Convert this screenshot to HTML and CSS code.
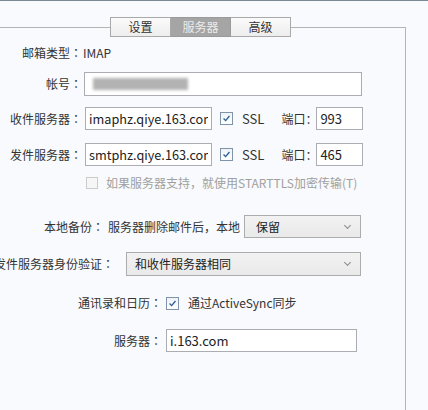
FILE: index.html
```html
<!DOCTYPE html>
<html lang="zh-CN">
<head>
<meta charset="utf-8">
<title>服务器设置</title>
<link rel="stylesheet" href="styles.css">
</head>
<body>
<div class="frame">
  <div class="tabs">
    <div class="tab">设置</div>
    <div class="tab active">服务器</div>
    <div class="tab">高级</div>
  </div>

  <div class="row r-type">
    <span class="label la">邮箱类型<span class="colon">：</span></span>
    <span class="value">IMAP</span>
  </div>

  <div class="row r-account">
    <span class="label la">帐号<span class="colon">：</span></span>
    <div class="field account"><span class="blur"></span></div>
  </div>

  <div class="row r-in">
    <span class="label la">收件服务器<span class="colon">：</span></span>
    <input class="field host" type="text" value="imaphz.qiye.163.com" readonly>
    <span class="check on"><svg viewBox="0 0 13 13"><path d="M3 6.5 L5.5 9 L10 3.5" /></svg></span>
    <span class="ssl">SSL</span>
    <span class="port-label">端口<span class="colon">：</span></span>
    <input class="field port" type="text" value="993" readonly>
  </div>

  <div class="row r-out">
    <span class="label la">发件服务器<span class="colon">：</span></span>
    <input class="field host" type="text" value="smtphz.qiye.163.com" readonly>
    <span class="check on"><svg viewBox="0 0 13 13"><path d="M3 6.5 L5.5 9 L10 3.5" /></svg></span>
    <span class="ssl">SSL</span>
    <span class="port-label">端口<span class="colon">：</span></span>
    <input class="field port" type="text" value="465" readonly>
  </div>

  <div class="row r-tls">
    <span class="check disabled"></span>
    <span class="muted">如果服务器支持，就使用STARTTLS加密传输(T)</span>
  </div>

  <div class="row r-backup">
    <span class="label lb">本地备份<span class="colon">：</span></span>
    <span class="value">服务器删除邮件后，本地</span>
    <div class="select keep"><span>保留</span><span class="chev"></span></div>
  </div>

  <div class="row r-auth">
    <span class="label lc">发件服务器身份验证<span class="colon">：</span></span>
    <div class="select same"><span>和收件服务器相同</span><span class="chev"></span></div>
  </div>

  <div class="row r-sync">
    <span class="label ld">通讯录和日历<span class="colon">：</span></span>
    <span class="check on"><svg viewBox="0 0 13 13"><path d="M3 6.5 L5.5 9 L10 3.5" /></svg></span>
    <span class="value sync">通过ActiveSync同步</span>
  </div>

  <div class="row r-server">
    <span class="label ld">服务器<span class="colon">：</span></span>
    <input class="field server" type="text" value="i.163.com" readonly>
  </div>
</div>
</body>
</html>
```

FILE: styles.css
```css
html, body {
  margin: 0;
  padding: 0;
  height: 100%;
  overflow: hidden;
}
body {
  background: #f8fafd;
  border-top: 1px solid #7b8793;
  font-family: "Noto Sans CJK SC", "Noto Sans", sans-serif;
  font-size: 12px;
  color: #333;
  box-sizing: border-box;
}
.colon {
  font-family: "Noto Sans CJK TC", "Noto Sans CJK SC", sans-serif;
}
.frame {
  margin-top: 26px;
  width: 405px;
  height: 400px;
  border-top: 1px solid #b4b4b4;
  border-right: 1px solid #b4b4b4;
  display: flex;
  flex-direction: column;
}
.tabs {
  display: flex;
  margin: -11px 0 0 110px;
  height: 20px;
}
.tab {
  width: 59px;
  height: 18px;
  border: 1px solid #a9a9a9;
  border-left: none;
  background: linear-gradient(#fbfbfb, #ededed);
  text-align: center;
  line-height: 18px;
  color: #333;
}
.tab:first-child {
  border-left: 1px solid #a9a9a9;
}
.tab.active {
  background: #a5a5a5;
  color: #ececec;
  border-color: #9a9a9a;
}
.row {
  display: flex;
  align-items: center;
  white-space: nowrap;
  line-height: 16px;
}
.label {
  flex: none;
  display: flex;
  justify-content: flex-end;
}
.la { width: 82px; margin-right: 2px; }
.lb { width: 104px; margin-right: 4px; }
.lc { width: 114px; margin-right: 12px; }
.ld { width: 162px; margin-right: 4px; }

.r-type { height: 24px; margin-top: 4px; }
.r-type .value { margin-left: -1px; }
.r-account { height: 24px; margin-top: 7px; }
.r-in { height: 23px; margin-top: 11px; }
.r-out { height: 23px; margin-top: 13px; }
.r-tls { height: 18px; margin-top: 8px; padding-left: 86px; }
.r-backup { height: 23px; margin-top: 23px; }
.r-auth { height: 24px; margin-top: 14px; }
.r-sync { height: 18px; margin-top: 18px; }
.r-server { height: 23px; margin-top: 17px; }

.field {
  box-sizing: border-box;
  height: 100%;
  border: 1px solid #abadb3;
  background: #fff;
  font: inherit;
  font-size: 13px;
  color: #222;
  padding: 0 3px;
  margin: 0;
  outline: none;
}
.account {
  width: 278px;
  display: flex;
  align-items: center;
  padding-left: 8px;
}
.blur {
  display: block;
  width: 95px;
  height: 12px;
  background: #b3b3b3;
  filter: blur(1.5px);
}
.host { width: 127px; margin-left: 1px; font-size: 12.7px; }
.port { width: 47px; }
.server { width: 191px; }

.check {
  flex: none;
  box-sizing: border-box;
  width: 13px;
  height: 13px;
  border: 1px solid #7f94ab;
  background: linear-gradient(#eef2f7, #ffffff);
  display: inline-flex;
}
.check svg {
  width: 11px;
  height: 11px;
  fill: none;
  stroke: #2d5f92;
  stroke-width: 1.6;
}
.check.disabled {
  width: 12px;
  height: 12px;
  border-color: #cbcbcb;
  background: #f6f6f6;
}
.r-in .check, .r-out .check { margin-left: 8px; }
.ssl { margin-left: 9px; font-size: 13px; }
.port-label { margin-left: 17px; margin-right: -1px; }
.muted { color: #a0a0a0; margin-left: 8px; }

.select {
  box-sizing: border-box;
  height: 100%;
  border: 1px solid #acacac;
  background: linear-gradient(#f2f2f2, #e9e9e9);
  display: flex;
  align-items: center;
  justify-content: space-between;
  padding: 0 10px 0 11px;
  color: #222;
}
.keep { width: 117px; margin-left: 4px; }
.same { width: 235px; padding-left: 8px; }
.chev {
  width: 4px;
  height: 4px;
  border-right: 1px solid #8a8a8a;
  border-bottom: 1px solid #8a8a8a;
  transform: rotate(45deg);
  margin-top: -3px;
}
.r-sync .check { margin-left: 0; }
.sync { margin-left: 9px; }
```
